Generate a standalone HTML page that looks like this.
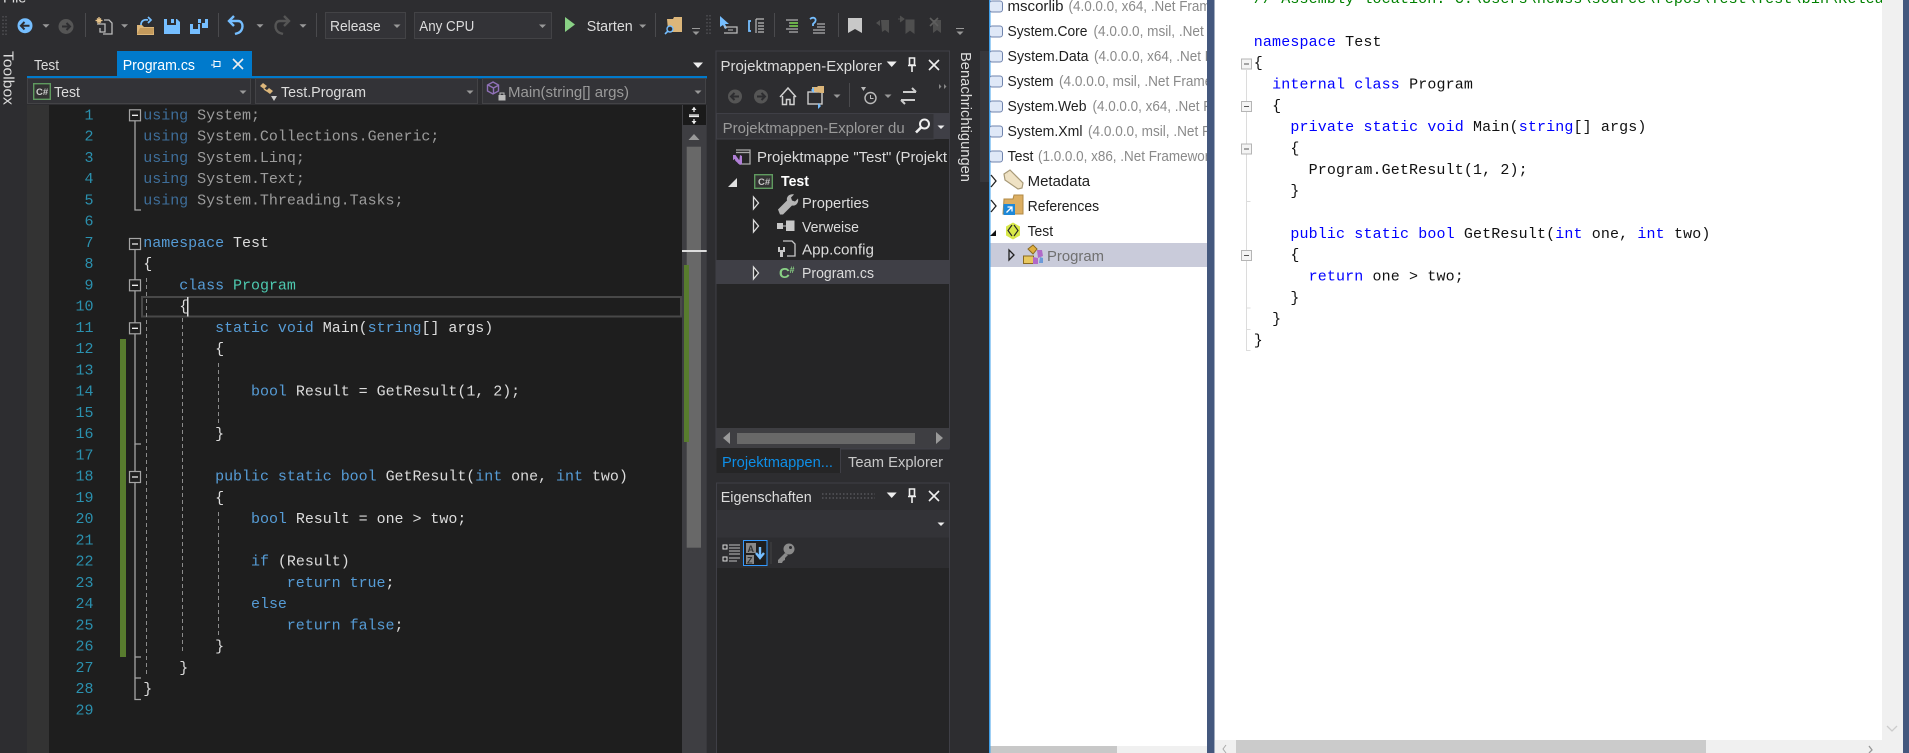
<!DOCTYPE html>
<html><head><meta charset="utf-8"><title>VS</title>
<style>
html,body{margin:0;padding:0;background:#2d2d30;overflow:hidden}
svg{display:block}
text{font-family:"Liberation Sans",sans-serif;font-size:14.5px;fill:#dcdcdc;white-space:pre}
.m text,text.m{font-family:"Liberation Mono",monospace;font-size:15px}
.c text{letter-spacing:-.03px;fill:#dcdcdc}
.r text{letter-spacing:.13px;fill:#111}
.n text{fill:#2b91af;text-anchor:end;font-family:"Liberation Mono",monospace;font-size:15px}
.k{fill:#569cd6}.t{fill:#4ec9b0}.du{fill:#3e6e9a}.ds{fill:#9c9c9c}
.b{fill:#0000ff}
.l text{fill:#1e1e1e}
</style></head><body>
<svg xmlns="http://www.w3.org/2000/svg" width="1909" height="753" viewBox="0 0 1909 753">
<defs>
<path id="dd" d="M-3.5-1.5h7L0 2z" fill="#999"/>
<path id="dw" d="M-5-2.5h10L0 3z" fill="#eee"/>
<g id="pin"><path d="M-2.5-7h5v7h-5z M-4 0.5h8 M0 1v6" fill="none" stroke="#eee" stroke-width="1.6"/></g>
<path id="x" d="M-5-5L5 5M5-5L-5 5" stroke="#eee" stroke-width="1.6" fill="none"/>
<clipPath id="cl"><rect x="990" y="0" width="217" height="753"/></clipPath>
<clipPath id="cr"><rect x="1215" y="0" width="667" height="753"/></clipPath>
<g id="asm"><rect x="-6.5" y="-5.5" width="13" height="11" rx="2.5" fill="#dfe8f7" stroke="#6f83ad"/></g>
</defs>

<rect width="1909" height="753" fill="#2d2d30"/>
<text x="3" y="2.500" font-size="15">File</text>

<!-- toolbar grips -->
<path d="M3 16v20M6 16v20" stroke="#46464a" stroke-width="2" stroke-dasharray="1.5 2"/>
<path d="M707 15v21M710 15v21" stroke="#46464a" stroke-width="2" stroke-dasharray="1.5 2"/>
<!-- back / forward -->
<circle cx="25" cy="25.7" r="7.5" fill="#75beff"/><path d="M29.5 25.7H21M24.5 22l-3.6 3.7 3.6 3.7" stroke="#2d2d30" stroke-width="2" fill="none"/>
<use href="#dd" x="46" y="25.7"/>
<circle cx="66" cy="26.5" r="7.5" fill="#555"/><path d="M62 26.5h8M66.5 23l3.5 3.5-3.5 3.5" stroke="#2d2d30" stroke-width="2" fill="none"/>
<rect x="85" y="13" width="1" height="24" fill="#4a4a4d"/>
<!-- new project -->
<path d="M104 20h5l3 3v11h-9" fill="none" stroke="#bbb" stroke-width="1.3"/><path d="M97 24h8v8h-5v-4" fill="none" stroke="#bbb" stroke-width="1.3"/>
<path d="M99 17v7M95.5 20.5h7M97 18.5l4 4M101 18.5l-4 4" stroke="#e8c48a" stroke-width="1.3"/>
<use href="#dd" x="124.6" y="25.7"/>
<!-- open -->
<path d="M137 25h5l2 2h10v8h-17z" fill="#dcb67a"/><path d="M137 34l3-6h14l-1 6z" fill="#c49a5c"/>
<path d="M141 25c0-4 3-6 7-5M148 17l3 3-3 3" stroke="#75beff" stroke-width="1.7" fill="none"/>
<!-- save -->
<path d="M164 19h3v6h9v-6h1l3 3v12h-16z" fill="#75beff"/><rect x="171" y="19" width="3" height="4" fill="#75beff"/>
<path d="M190 24h3v5h5v-5h2v10h-10z" fill="#75beff"/><path d="M198 19h3v4h4v-4h3v9h-6v-5h-4z" fill="#75beff"/>
<rect x="218" y="13" width="1" height="24" fill="#4a4a4d"/>
<!-- undo redo -->
<path d="M230 21h8c6 0 6 10 0 12l-3 1" stroke="#75beff" stroke-width="2.4" fill="none"/><path d="M234 16l-5 5 5 5" stroke="#75beff" stroke-width="2.4" fill="none"/>
<use href="#dd" x="260" y="25.7"/>
<path d="M288 21h-8c-6 0-6 10 0 12l3 1" stroke="#555" stroke-width="2.4" fill="none"/><path d="M284 16l5 5-5 5" stroke="#555" stroke-width="2.4" fill="none"/>
<use href="#dd" x="303" y="25.7"/>
<rect x="316" y="13" width="1" height="24" fill="#4a4a4d"/>
<!-- combos -->
<rect x="325.5" y="12.5" width="80" height="26" fill="#333337" stroke="#434346"/>
<text x="330" y="31" textLength="50.7" lengthAdjust="spacingAndGlyphs">Release</text><use href="#dd" x="397" y="26"/>
<rect x="414.5" y="12.5" width="137" height="26" fill="#333337" stroke="#434346"/>
<text x="419.3" y="31" textLength="55" lengthAdjust="spacingAndGlyphs">Any CPU</text><use href="#dd" x="542.5" y="26"/>
<path d="M565 17l10 7.5-10 7.5z" fill="#89d185"/>
<text x="586.7" y="31" textLength="46" lengthAdjust="spacingAndGlyphs">Starten</text><use href="#dd" x="642.7" y="26"/>
<rect x="655" y="13" width="1" height="24" fill="#4a4a4d"/>
<path d="M667 19h6l1-2h8v15h-14v-2z" fill="#dcb67a"/><circle cx="670" cy="29" r="3" fill="#2d2d30" stroke="#75beff" stroke-width="1.4"/><path d="M668 31l-3 3" stroke="#75beff" stroke-width="1.6"/>
<path d="M692 28.5h8" stroke="#999"/><use href="#dd" x="696" y="33"/>

<path d="M720 16l9 8h-4l2 4-2 1-2-4-3 2z" fill="#75beff"/><path d="M724 27h13v6h-13" fill="none" stroke="#bbb" stroke-width="1.3"/><path d="M728 30h5" stroke="#bbb"/>
<path d="M751 21h-2v10h2" stroke="#75beff" stroke-width="1.8" fill="none"/><path d="M756 19h8M756 19v14M758 23h6M758 26h6M758 29h6M758 32h6" stroke="#bbb" stroke-width="1.2" fill="none"/>
<rect x="774" y="13" width="1" height="24" fill="#4a4a4d"/>
<path d="M786 20h12M789 23h9M789 26h9M786 29h12M789 32h9" stroke="#b0b0b0" stroke-width="1.3"/><path d="M790 23h8M790 26h8" stroke="#6cb04a" stroke-width="2"/>
<path d="M810 19c4-3 7 0 5 3l-2 2v2" stroke="#75beff" stroke-width="1.8" fill="none"/><path d="M817 24h8M817 27h8M813 30h12M813 33h12" stroke="#b0b0b0" stroke-width="1.3"/>
<rect x="838" y="13" width="1" height="24" fill="#4a4a4d"/>
<path d="M848 18h14v15l-7-4-7 4z" fill="#c8c8c8"/>
<path d="M881 20h8v13l-4-3-3 2z M880 20l-4 3 4 3" fill="#4f4f4f"/>
<path d="M906 20h8v13l-4-3-4 3z M904 19h-6M900 16l4 3-4 3" fill="#4f4f4f" stroke="#4f4f4f"/>
<path d="M933 20h8v13l-4-3-4 3z" fill="#4f4f4f"/><path d="M930 18l8 8M938 18l-8 8" stroke="#5e5e5e" stroke-width="1.6"/>
<path d="M956 28.5h8" stroke="#999"/><use href="#dd" x="960" y="33"/>

<!-- toolbox -->
<text transform="translate(3.5 51) rotate(90)" textLength="54" lengthAdjust="spacingAndGlyphs">Toolbox</text>

<!-- document tabs -->
<text x="34" y="70" textLength="25" lengthAdjust="spacingAndGlyphs">Test</text>
<rect x="117" y="51" width="135" height="27" fill="#007acc"/>
<text x="122.7" y="70" textLength="72.3" lengthAdjust="spacingAndGlyphs" style="fill:#fff">Program.cs</text>
<path d="M211 65h3M214 61.5h6v5h-6zM214 60v8" stroke="#fff" fill="none"/>
<use href="#x" x="238" y="64"/>
<use href="#dw" x="698" y="65"/>
<rect x="27" y="76" width="680" height="2.4" fill="#007acc"/>

<!-- nav combos -->
<rect x="27.5" y="78.5" width="223" height="25" fill="#333337" stroke="#434346"/>
<rect x="255.5" y="78.5" width="222" height="25" fill="#333337" stroke="#434346"/>
<rect x="482.5" y="78.5" width="223" height="25" fill="#333337" stroke="#434346"/>
<rect x="33.7" y="83.7" width="16.6" height="15.6" fill="#333" stroke="#5f9a5f" stroke-width="1.4"/>
<text x="36" y="95" style="font-size:9.5px;font-weight:bold;fill:#cfcfcf">C#</text>
<text x="54" y="97" textLength="26" lengthAdjust="spacingAndGlyphs">Test</text><use href="#dd" x="243" y="92"/>
<path d="M260 86l3-3 4 3-3 3zM266 91l3-3 4 3-3 3z" fill="#dcb67a"/><path d="M264 89l3 2" stroke="#dcb67a" stroke-width="1.500"/><path d="M271 96h6l-3 5z" fill="#ccc"/>
<text x="281" y="97" textLength="85" lengthAdjust="spacingAndGlyphs">Test.Program</text><use href="#dd" x="470" y="92"/>
<path d="M493 82l5.5 3v6l-5.5 3-5.500-3v-6zM488 85l5.500 3 5.500-3M493.500 88v6" fill="none" stroke="#9071b8" stroke-width="1.4"/>
<rect x="498.500" y="95" width="7" height="5.500" fill="#bbb"/><path d="M500 95v-2h4v2" stroke="#bbb" fill="none"/>
<text x="508" y="97" textLength="121" lengthAdjust="spacingAndGlyphs" style="fill:#9a9a9a">Main(string[] args)</text><use href="#dd" x="698" y="92"/>

<!-- editor -->
<rect x="27" y="105" width="22" height="648" fill="#333333"/>
<rect x="49" y="105" width="633" height="648" fill="#1e1e1e"/>
<rect x="142" y="297" width="539" height="19.500" fill="none" stroke="#484848" stroke-width="2"/>
<rect x="187" y="297" width="1.500" height="19.500" fill="#dcdcdc"/>
<rect x="120" y="339" width="6" height="318" fill="#587c2e"/>

<g stroke="#8b8b8b" stroke-dasharray="4 3" stroke-width="1">
<path d="M146.500 278V677"/><path d="M182.500 318V653"/><path d="M218.500 363V423"/><path d="M218.500 512V635"/>
</g>
<g stroke="#a5a5a5" stroke-width="1.300" fill="none">
<path d="M135 121V210h6"/><path d="M135 250V444h6"/><path d="M135 444V657h6M135 657V678h6M135 678V699.500h6"/>
</g>
<g fill="#1e1e1e" stroke="#a5a5a5" stroke-width="1.200">
<rect x="129.500" y="109.800" width="11" height="11"/><rect x="129.500" y="238.500" width="11" height="11"/><rect x="129.500" y="279.800" width="11" height="11"/><rect x="129.500" y="322.800" width="11" height="11"/><rect x="129.500" y="471.500" width="11" height="11"/>
</g>
<path d="M132 115.300h6M132 244h6M132 285.300h6M132 328.300h6M132 477h6" stroke="#eee" stroke-width="1.300"/>

<g class="n" transform="translate(0 -1.200)">
<text x="93.500" y="120.700">1</text><text x="93.500" y="141.900">2</text><text x="93.500" y="163.200">3</text><text x="93.500" y="184.400">4</text><text x="93.500" y="205.700">5</text><text x="93.500" y="226.900">6</text><text x="93.500" y="248.200">7</text><text x="93.500" y="269.400">8</text><text x="93.500" y="290.700">9</text><text x="93.500" y="311.900">10</text><text x="93.500" y="333.200">11</text><text x="93.500" y="354.400">12</text><text x="93.500" y="375.700">13</text><text x="93.500" y="396.900">14</text><text x="93.500" y="418.200">15</text><text x="93.500" y="439.400">16</text><text x="93.500" y="460.700">17</text><text x="93.500" y="481.900">18</text><text x="93.500" y="503.200">19</text><text x="93.500" y="524.400">20</text><text x="93.500" y="545.700">21</text><text x="93.500" y="566.900">22</text><text x="93.500" y="588.200">23</text><text x="93.500" y="609.400">24</text><text x="93.500" y="630.700">25</text><text x="93.500" y="651.900">26</text><text x="93.500" y="673.200">27</text><text x="93.500" y="694.400">28</text><text x="93.500" y="715.700">29</text>
</g>
<g class="m c" transform="translate(0 -1.200)">
<text x="143.300" y="120.700"><tspan class="du">using</tspan><tspan class="ds"> System;</tspan></text>
<text x="143.300" y="141.900"><tspan class="du">using</tspan><tspan class="ds"> System.Collections.Generic;</tspan></text>
<text x="143.300" y="163.200"><tspan class="du">using</tspan><tspan class="ds"> System.Linq;</tspan></text>
<text x="143.300" y="184.400"><tspan class="du">using</tspan><tspan class="ds"> System.Text;</tspan></text>
<text x="143.300" y="205.700"><tspan class="du">using</tspan><tspan class="ds"> System.Threading.Tasks;</tspan></text>
<text x="143.300" y="248.200"><tspan class="k">namespace</tspan> Test</text>
<text x="143.300" y="269.400">{</text>
<text x="179.200" y="290.700"><tspan class="k">class</tspan> <tspan class="t">Program</tspan></text>
<text x="179.200" y="311.900">{</text>
<text x="215.100" y="333.200"><tspan class="k">static void</tspan> Main(<tspan class="k">string</tspan>[] args)</text>
<text x="215.100" y="354.400">{</text>
<text x="251" y="396.900"><tspan class="k">bool</tspan> Result = GetResult(1, 2);</text>
<text x="215.100" y="439.400">}</text>
<text x="215.100" y="481.900"><tspan class="k">public static bool</tspan> GetResult(<tspan class="k">int</tspan> one, <tspan class="k">int</tspan> two)</text>
<text x="215.100" y="503.200">{</text>
<text x="251" y="524.400"><tspan class="k">bool</tspan> Result = one &gt; two;</text>
<text x="251" y="566.900"><tspan class="k">if</tspan> (Result)</text>
<text x="286.800" y="588.200"><tspan class="k">return true</tspan>;</text>
<text x="251" y="609.400"><tspan class="k">else</tspan></text>
<text x="286.800" y="630.700"><tspan class="k">return false</tspan>;</text>
<text x="215.100" y="651.900">}</text>
<text x="179.200" y="673.200">}</text>
<text x="143.300" y="694.400">}</text>
</g>

<!-- editor scrollbar -->
<rect x="682" y="105" width="24.700" height="648" fill="#3e3e42"/>
<rect x="683" y="105" width="23" height="20" fill="#1a1a1a"/>
<path d="M689 115h10M689 116.500h10M694 107v5M694 119v5" stroke="#eee" stroke-width="1.200"/><path d="M691.500 110l2.500-3 2.500 3zM691.500 121l2.500 3 2.500-3z" fill="#eee"/>
<path d="M688.500 140l5.500-6 5.500 6z" fill="#999"/>
<rect x="686.700" y="146.700" width="14.300" height="401" fill="#686868"/>
<rect x="682" y="250" width="24.700" height="2" fill="#ddd"/>
<rect x="684" y="265" width="5" height="177" fill="#587c2e"/>

<!-- solution explorer -->
<rect x="716" y="51" width="233.500" height="397" fill="#2d2d30" stroke="#3f3f46"/>
<rect x="716.500" y="139" width="232.500" height="289" fill="#252526"/>
<text x="720.500" y="71" textLength="161.500" lengthAdjust="spacingAndGlyphs">Projektmappen-Explorer</text>
<use href="#dw" x="891.700" y="64"/><use href="#pin" x="912" y="65"/><use href="#x" x="934" y="65"/>
<circle cx="735" cy="96.500" r="7" fill="#555"/><path d="M739 96.500h-8M734.500 93l-3.500 3.500 3.500 3.500" stroke="#2d2d30" stroke-width="2" fill="none"/>
<circle cx="761" cy="96.500" r="7" fill="#555"/><path d="M757 96.500h8M761.500 93l3.500 3.500-3.500 3.500" stroke="#2d2d30" stroke-width="2" fill="none"/>
<path d="M780 97l8-9 8 9M782.500 96v8.500h4v-5h3.500v5h4v-8.500" stroke="#d0d0d0" stroke-width="1.500" fill="none"/>
<rect x="808" y="92" width="14" height="12" fill="#2d2d30" stroke="#ccc" stroke-width="1.400"/><path d="M812 91v-4h5l1-1h6v7h-3z" fill="#dcb67a"/><path d="M811 90l3-3v6zM821 106l-3-3v6z" fill="#75beff"/>
<use href="#dd" x="837" y="96"/>
<rect x="849" y="83" width="1" height="24" fill="#4a4a4d"/>
<path d="M861 87h5l-2.500 4z" fill="#bbb"/><circle cx="870.500" cy="98" r="5.500" fill="none" stroke="#bbb" stroke-width="1.400"/><path d="M870.500 95v3.500h3" stroke="#bbb" fill="none"/>
<use href="#dd" x="888" y="96"/>
<path d="M903 92h13M916 92l-4-4M901 100h14M901 100l4 4" stroke="#ccc" stroke-width="2" fill="none"/>
<path d="M939 84l2.500 2.500-2.500 2.500zM944 84l2.500 2.500-2.500 2.500z" fill="#888"/>

<rect x="716.500" y="113.500" width="217.500" height="25.500" fill="#333337" stroke="#3f3f46"/>
<rect x="934" y="113" width="15" height="26" fill="#3f3f46"/>
<text x="722.700" y="133" textLength="182" lengthAdjust="spacingAndGlyphs" style="fill:#9a9a9a">Projektmappen-Explorer du</text>
<circle cx="924.500" cy="124" r="4.500" fill="none" stroke="#eee" stroke-width="2"/><path d="M921 127.500l-5 5" stroke="#eee" stroke-width="2.600"/>
<path d="M937.500 125.500h7l-3.500 3.500z" fill="#eee"/>

<rect x="716.500" y="260" width="232.500" height="24" fill="#3f3f46"/>
<path d="M736 150h14v14h-9" fill="none" stroke="#aaa" stroke-width="1.300"/><path d="M736 152.500h14" stroke="#aaa" stroke-width="1.300"/>
<path d="M733 155l2.500 0 5 7-2 2-4-5-1.500 1.200zM740 155l2 1v8l-2 1-5-4.500 1-1 3 2.500z" fill="#b180d7"/>
<text x="757" y="162" textLength="190" lengthAdjust="spacingAndGlyphs">Projektmappe "Test" (Projekt</text>
<path d="M728 187l9-9v9z" fill="#e0e0e0"/>
<rect x="754.700" y="174.700" width="17.600" height="13.600" fill="#333" stroke="#5f9a5f" stroke-width="1.400"/>
<text x="758" y="185" style="font-size:9.500px;font-weight:bold;fill:#c8c8c8">C#</text>
<text x="781" y="186" textLength="28" lengthAdjust="spacingAndGlyphs" style="font-weight:bold;fill:#fff">Test</text>
<path d="M753.500 197v12l5-6zM753.500 220v12l5-6zM753.500 267v12l5-6z" fill="#252526" stroke="#ddd" stroke-width="1.300"/>
<path d="M778 210l9-9c-1-4 3-7 7-6l-3 3 1 3 3 1 3-3c1 4-2 8-6 7l-9 9h-3z" fill="#b5b5b5" transform="translate(0 -.500)"/>
<text x="802" y="208" textLength="67" lengthAdjust="spacingAndGlyphs">Properties</text>
<rect x="777" y="223" width="6" height="6" fill="#c8c8c8"/><path d="M783 226h3" stroke="#c8c8c8"/><rect x="786" y="220.500" width="8.500" height="10.500" fill="#c8c8c8"/>
<text x="802" y="232" textLength="57" lengthAdjust="spacingAndGlyphs">Verweise</text>
<path d="M783 241h9l3 3v12h-8" fill="none" stroke="#c8c8c8" stroke-width="1.300"/><path d="M778 247h2v3h3v-3h2v5h-2v5h-3v-5h-2z" fill="#c8c8c8"/>
<text x="802" y="254.500" textLength="72" lengthAdjust="spacingAndGlyphs">App.config</text>
<text x="779" y="278" style="font-size:15px;font-weight:bold;fill:#89d185">C</text><text x="789.500" y="273" style="font-size:9px;font-weight:bold;fill:#89d185">#</text>
<text x="802" y="278" textLength="72" lengthAdjust="spacingAndGlyphs">Program.cs</text>

<!-- SE scrollbar -->
<rect x="716.500" y="428" width="233" height="20" fill="#3e3e42"/>
<path d="M730 432l-7 6 7 6z" fill="#999"/><path d="M936 432l7 6-7 6z" fill="#999"/>
<rect x="737" y="433" width="178" height="11" fill="#686868"/>
<!-- tabs -->
<rect x="716.500" y="448" width="123.500" height="25" fill="#252526"/>
<path d="M840.500 473v-24h109" fill="none" stroke="#3f3f46"/>
<text x="722" y="467" textLength="111" lengthAdjust="spacingAndGlyphs" style="fill:#0e8fe8">Projektmappen...</text>
<text x="848" y="467" textLength="95" lengthAdjust="spacingAndGlyphs" style="fill:#c8c8c8">Team Explorer</text>

<!-- properties -->
<rect x="716.500" y="483" width="233" height="270" fill="#2d2d30" stroke="#3f3f46"/>
<text x="720.700" y="502" textLength="91" lengthAdjust="spacingAndGlyphs">Eigenschaften</text>
<path d="M822 494h53M822 498h53" stroke="#4b4b4f" stroke-width="2" stroke-dasharray="1.500 2"/>
<use href="#dw" x="891.700" y="495"/><use href="#pin" x="912" y="496"/><use href="#x" x="934" y="496"/>
<rect x="717" y="510" width="232" height="27.500" fill="#333337"/>
<path d="M937.500 522.500h7l-3.500 3.500z" fill="#eee"/>
<rect x="717" y="538" width="232" height="30" fill="#2d2d30"/>
<rect x="717" y="568" width="232" height="185" fill="#252526"/>
<rect x="723" y="545" width="4" height="4" fill="none" stroke="#ddd"/><rect x="723" y="557" width="4" height="4" fill="none" stroke="#ddd"/>
<path d="M729 545h11M729 548h11M729 551h11M729 554h11M729 558h11M729 561h8" stroke="#c0c0c0" stroke-width="1.100"/>
<rect x="743.500" y="540.500" width="23.500" height="25" fill="#1e1e1e" stroke="#3399ff"/>
<rect x="746" y="543" width="10" height="10" fill="#888"/><text x="747.500" y="552" style="font-size:9px;font-weight:bold;fill:#333">A</text>
<rect x="746" y="555" width="8" height="9" fill="#888"/><text x="747" y="563.500" style="font-size:9px;font-weight:bold;fill:#333">Z</text>
<path d="M760 547v10M756 553l4 5 4-5" stroke="#75beff" stroke-width="2.400" fill="none"/>
<rect x="770.500" y="542" width="1" height="22" fill="#444"/>
<circle cx="789" cy="549" r="5.500" fill="#8a8a8a"/><circle cx="790.500" cy="547.500" r="1.500" fill="#2d2d30"/><path d="M785 553l-7 7v3h4l1-2 2-1v-2l3-3z" fill="#8a8a8a"/>

<!-- notifications -->
<rect x="980" y="51" width="10" height="131" fill="#37373b"/>
<text transform="translate(961 52) rotate(90)" textLength="130" lengthAdjust="spacingAndGlyphs">Benachrichtigungen</text>

<!-- white window left -->
<rect x="990" y="0" width="217" height="753" fill="#fff"/>
<rect x="989" y="0" width="1.500" height="753" fill="#3f9fe8"/>
<rect x="990.500" y="243" width="216.500" height="24" fill="#c9cbda"/>
<g clip-path="url(#cl)">
<g class="l">
<use href="#asm" x="996" y="6.500"/><use href="#asm" x="996" y="31.500"/><use href="#asm" x="996" y="56.500"/><use href="#asm" x="996" y="81.500"/><use href="#asm" x="996" y="106.500"/><use href="#asm" x="996" y="131.500"/><use href="#asm" x="996" y="156.500"/>
<text x="1007.500" y="11" textLength="56" lengthAdjust="spacingAndGlyphs">mscorlib</text><text x="1068.500" y="11" textLength="178" lengthAdjust="spacingAndGlyphs" style="fill:#8a8a8a">(4.0.0.0, x64, .Net Framework</text>
<text x="1007.500" y="36" textLength="80" lengthAdjust="spacingAndGlyphs">System.Core</text><text x="1093.500" y="36" textLength="182" lengthAdjust="spacingAndGlyphs" style="fill:#8a8a8a">(4.0.0.0, msil, .Net Framework</text>
<text x="1007.500" y="61" textLength="81" lengthAdjust="spacingAndGlyphs">System.Data</text><text x="1094" y="61" textLength="178" lengthAdjust="spacingAndGlyphs" style="fill:#8a8a8a">(4.0.0.0, x64, .Net Framework</text>
<text x="1007.500" y="86" textLength="46" lengthAdjust="spacingAndGlyphs">System</text><text x="1059" y="86" textLength="182" lengthAdjust="spacingAndGlyphs" style="fill:#8a8a8a">(4.0.0.0, msil, .Net Framework</text>
<text x="1007.500" y="111" textLength="79" lengthAdjust="spacingAndGlyphs">System.Web</text><text x="1092.500" y="111" textLength="178" lengthAdjust="spacingAndGlyphs" style="fill:#8a8a8a">(4.0.0.0, x64, .Net Framework</text>
<text x="1007.500" y="136" textLength="75" lengthAdjust="spacingAndGlyphs">System.Xml</text><text x="1088" y="136" textLength="182" lengthAdjust="spacingAndGlyphs" style="fill:#8a8a8a">(4.0.0.0, msil, .Net Framework</text>
<text x="1007.500" y="161" textLength="26" lengthAdjust="spacingAndGlyphs">Test</text><text x="1038" y="161" textLength="178" lengthAdjust="spacingAndGlyphs" style="fill:#8a8a8a">(1.0.0.0, x86, .Net Framework</text>
<path d="M991 175l5 6-5 6M991 200l5 6-5 6" fill="none" stroke="#222" stroke-width="1.300"/>
<path d="M1004 174l6-4 13 13-1 5-4 1-13-9zM1007.500 173.500h.1" fill="#efe2c4" stroke="#a89a78" stroke-width="1.200"/>
<text x="1027.600" y="186" textLength="62.500" lengthAdjust="spacingAndGlyphs">Metadata</text>
<path d="M1004 199h9l1-4h9v19h-20z" fill="#dcae62" stroke="#b08a45"/><rect x="1003.500" y="204" width="11.500" height="11" fill="#1e88d8"/><path d="M1006.500 212.500l5-5M1007.500 207h4.500v4.500" stroke="#fff" fill="none" stroke-width="1.300"/>
<text x="1027.600" y="211" textLength="71.500" lengthAdjust="spacingAndGlyphs">References</text>
<path d="M990 236l6-6v6z" fill="#111"/>
<path d="M1013 222.500l7 4v9l-7 4-7-4v-9z" fill="#d8e84a"/><path d="M1012 225l-4 5.500 4 5.500M1014 225l4 5.500-4 5.500" stroke="#2a2a2a" fill="none" stroke-width="1.200"/>
<text x="1027.600" y="236" textLength="25.500" lengthAdjust="spacingAndGlyphs">Test</text>
<path d="M1009 250v10l5-5z" fill="#c9cbda" stroke="#222" stroke-width="1.300"/>
<path d="M1028 249l5-4 4 4-4 5z" fill="#e0b040" stroke="#8a6a20"/><rect x="1023.500" y="256" width="10" height="7.500" fill="#e8c860" stroke="#8a6a20"/><path d="M1037 250h5l1 6-5 2zM1033 257l5 1v6h-5z" fill="#b06ac8"/><path d="M1040 257l3 1v5h-4z" fill="#6c9ad8"/>
<text x="1047" y="261" textLength="57" lengthAdjust="spacingAndGlyphs" style="fill:#707070">Program</text>
</g>
</g>
<rect x="990.500" y="746" width="216.500" height="7" fill="#f0f0f0"/>
<rect x="990.500" y="746" width="126.500" height="7" fill="#c8c8c8"/>

<!-- separator -->
<rect x="1207" y="0" width="7.500" height="753" fill="#44587e"/>

<!-- right pane -->
<rect x="1214.500" y="0" width="688.500" height="753" fill="#fff"/>
<rect x="1882" y="0" width="21" height="753" fill="#f0f0f0"/>
<rect x="1903" y="0" width="6" height="753" fill="#44587e"/>
<path d="M1887 726l5 5 5-5" stroke="#ccc" fill="none" stroke-width="1.300"/>
<rect x="1215" y="740" width="688" height="13" fill="#f0f0f0"/>
<rect x="1236" y="740" width="470" height="13" fill="#cbcbcb"/>
<path d="M1226 745l-3 4 3 4" stroke="#aaa" fill="none"/><path d="M1869 746l3 4-3 3" stroke="#999" fill="none" stroke-width="1.300"/>

<path d="M1246.500 70V350.500h4M1246.500 201.500h4M1246.500 308h4M1246.500 329.500h4" stroke="#dcdcdc" fill="none"/>
<g fill="#f4f4f4" stroke="#b5b5b5"><rect x="1241.500" y="59" width="10" height="10"/><rect x="1241.500" y="101.500" width="10" height="10"/><rect x="1241.500" y="144" width="10" height="10"/><rect x="1241.500" y="250.500" width="10" height="10"/></g>
<path d="M1244 64h5M1244 106.500h5M1244 149h5M1244 255.500h5" stroke="#555"/>
<g class="m r" clip-path="url(#cr)" transform="translate(0 -.600)">
<text x="1253.800" y="3.800" style="fill:#008000">// Assembly location: C:\Users\newss\source\repos\Test\Test\bin\Release\Test.exe</text>
<text x="1253.800" y="46.500"><tspan class="b">namespace</tspan> Test</text>
<text x="1253.800" y="67.800">{</text>
<text x="1272.100" y="89.200"><tspan class="b">internal class</tspan> Program</text>
<text x="1272.100" y="110.500">{</text>
<text x="1290.400" y="131.800"><tspan class="b">private static void</tspan> Main(<tspan class="b">string</tspan>[] args)</text>
<text x="1290.400" y="153.200">{</text>
<text x="1308.600" y="174.500">Program.GetResult(1, 2);</text>
<text x="1290.400" y="195.800">}</text>
<text x="1290.400" y="238.500"><tspan class="b">public static bool</tspan> GetResult(<tspan class="b">int</tspan> one, <tspan class="b">int</tspan> two)</text>
<text x="1290.400" y="259.800">{</text>
<text x="1308.600" y="281.200"><tspan class="b">return</tspan> one &gt; two;</text>
<text x="1290.400" y="302.500">}</text>
<text x="1272.100" y="323.800">}</text>
<text x="1253.800" y="345.200">}</text>
</g>
</svg>
</body></html>
